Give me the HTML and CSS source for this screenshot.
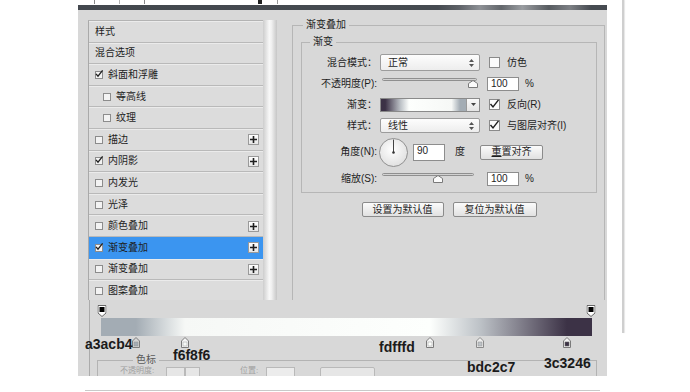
FILE: index.html
```html
<!DOCTYPE html>
<html>
  <head>
    <meta charset="utf-8">
    <link rel="stylesheet" href="styles.css">
  </head>
  <body>
    <div class="page">
      <div class="shot">
        <div class="strip">
          <span class="tick tick-a"></span>
          <span class="tick tick-b"></span>
          <span class="tick tick-c"></span>
          <span class="tick tick-d"></span>
          <span class="tick tick-e"></span>
        </div>
        <div class="titlebar"></div>

        <div class="dialog">
          <div class="main">
            <ul class="styles-list">
              <li class="row"><span>样式</span></li>
              <li class="row"><span>混合选项</span></li>
              <li class="row">
                <span class="box"><svg width="8" height="8" viewBox="0 0 8 8"><path d="M1 3.8 L3 6.2 L7.6 0.4" fill="none" stroke="#1e1e1e" stroke-width="1.3"/></svg></span>
                <span>斜面和浮雕</span>
              </li>
              <li class="row sub"><span class="box"></span><span>等高线</span></li>
              <li class="row sub"><span class="box"></span><span>纹理</span></li>
              <li class="row">
                <span class="box"></span><span>描边</span>
                <span class="plus"><svg width="7" height="7" viewBox="0 0 7 7"><path d="M3.5 0 V7 M0 3.5 H7" stroke="#1e1e1e" stroke-width="1.6"/></svg></span>
              </li>
              <li class="row">
                <span class="box"><svg width="8" height="8" viewBox="0 0 8 8"><path d="M1 3.8 L3 6.2 L7.6 0.4" fill="none" stroke="#1e1e1e" stroke-width="1.3"/></svg></span>
                <span>内阴影</span>
                <span class="plus"><svg width="7" height="7" viewBox="0 0 7 7"><path d="M3.5 0 V7 M0 3.5 H7" stroke="#1e1e1e" stroke-width="1.6"/></svg></span>
              </li>
              <li class="row"><span class="box"></span><span>内发光</span></li>
              <li class="row"><span class="box"></span><span>光泽</span></li>
              <li class="row">
                <span class="box"></span><span>颜色叠加</span>
                <span class="plus"><svg width="7" height="7" viewBox="0 0 7 7"><path d="M3.5 0 V7 M0 3.5 H7" stroke="#1e1e1e" stroke-width="1.6"/></svg></span>
              </li>
              <li class="row active">
                <span class="box"><svg width="8" height="8" viewBox="0 0 8 8"><path d="M1 3.8 L3 6.2 L7.6 0.4" fill="none" stroke="#1e1e1e" stroke-width="1.3"/></svg></span>
                <span>渐变叠加</span>
                <span class="plus"><svg width="7" height="7" viewBox="0 0 7 7"><path d="M3.5 0 V7 M0 3.5 H7" stroke="#1e1e1e" stroke-width="1.6"/></svg></span>
              </li>
              <li class="row">
                <span class="box"></span><span>渐变叠加</span>
                <span class="plus"><svg width="7" height="7" viewBox="0 0 7 7"><path d="M3.5 0 V7 M0 3.5 H7" stroke="#1e1e1e" stroke-width="1.6"/></svg></span>
              </li>
              <li class="row"><span class="box"></span><span>图案叠加</span></li>
            </ul>
            <div class="scrollbar"></div>

            <fieldset class="group outer">
              <legend>渐变叠加</legend>
              <fieldset class="group inner">
                <legend>渐变</legend>

                <div class="form-row">
                  <span class="field-label">混合模式：</span>
                  <div class="select">
                    <span>正常</span>
                    <svg width="5" height="8" viewBox="0 0 5 8"><path d="M0 3 L2.5 0 L5 3 Z M0 5 L2.5 8 L5 5 Z" fill="#555"/></svg>
                  </div>
                  <div class="check-wrap"><span class="check"></span><span>仿色</span></div>
                </div>

                <div class="form-row">
                  <span class="field-label">不透明度(P):</span>
                  <div class="slider">
                    <div class="track"></div>
                    <svg class="thumb thumb-opacity" width="10" height="8" viewBox="0 0 10 8"><path d="M0.5 7.5 V3.5 L5 0.5 L9.5 3.5 V7.5 Z" fill="#fbfbfb" stroke="#7a7a7a"/></svg>
                  </div>
                  <span class="num">100</span>
                  <span class="unit">%</span>
                </div>

                <div class="form-row">
                  <span class="field-label">渐变：</span>
                  <div class="ramp-pick">
                    <div class="swatch"></div>
                    <div class="drop"><svg width="5" height="3" viewBox="0 0 5 3"><path d="M0 0 H5 L2.5 3 Z" fill="#444"/></svg></div>
                  </div>
                  <div class="check-wrap">
                    <span class="check"><svg width="10" height="10" viewBox="0 0 10 10"><path d="M1.5 5 L4 8 L9.5 0.8" fill="none" stroke="#1e1e1e" stroke-width="1.4"/></svg></span>
                    <span>反向(R)</span>
                  </div>
                </div>

                <div class="form-row">
                  <span class="field-label">样式：</span>
                  <div class="select select-short">
                    <span>线性</span>
                    <svg width="5" height="8" viewBox="0 0 5 8"><path d="M0 3 L2.5 0 L5 3 Z M0 5 L2.5 8 L5 5 Z" fill="#555"/></svg>
                  </div>
                  <div class="check-wrap">
                    <span class="check"><svg width="10" height="10" viewBox="0 0 10 10"><path d="M1.5 5 L4 8 L9.5 0.8" fill="none" stroke="#1e1e1e" stroke-width="1.4"/></svg></span>
                    <span>与图层对齐(I)</span>
                  </div>
                </div>

                <div class="form-row tall">
                  <span class="field-label">角度(N):</span>
                  <div class="ctrl">
                    <svg class="dial" width="29" height="29" viewBox="0 0 29 29">
                      <defs>
                        <radialGradient id="dialFill" cx="0.45" cy="0.4" r="0.65">
                          <stop offset="0" stop-color="#ffffff"/>
                          <stop offset="1" stop-color="#dedede"/>
                        </radialGradient>
                      </defs>
                      <circle cx="14.5" cy="14.5" r="14" fill="url(#dialFill)" stroke="#8f8f8f"/>
                      <path d="M14.5 14.5 V1.5" stroke="#444" stroke-width="1"/>
                      <circle cx="14.5" cy="14.5" r="1.3" fill="#333"/>
                    </svg>
                    <span class="num num-angle">90</span>
                    <span class="unit-deg">度</span>
                  </div>
                  <button class="btn btn-reset"><u>重</u>置对齐</button>
                </div>

                <div class="form-row">
                  <span class="field-label">缩放(S):</span>
                  <div class="slider slider-scale">
                    <div class="track"></div>
                    <svg class="thumb thumb-scale" width="10" height="8" viewBox="0 0 10 8"><path d="M0.5 7.5 V3.5 L5 0.5 L9.5 3.5 V7.5 Z" fill="#fbfbfb" stroke="#7a7a7a"/></svg>
                  </div>
                  <span class="num">100</span>
                  <span class="unit">%</span>
                </div>
              </fieldset>

              <div class="btn-row">
                <button class="btn btn-default">设置为默认值</button>
                <button class="btn btn-restore">复位为默认值</button>
              </div>
            </fieldset>
          </div>

          <div class="editor">
            <div class="editor-frame">
              <div class="ramp">
                <div class="ramp-stops">
                  <svg class="stop stop-left" width="9" height="12" viewBox="0 0 9 12"><path d="M0.5 0.5 H8.5 V8 L4.5 11.5 L0.5 8 Z" fill="#fff" stroke="#666"/><rect x="2" y="2" width="5" height="5" fill="#000"/></svg>
                  <svg class="stop stop-right" width="9" height="12" viewBox="0 0 9 12"><path d="M0.5 0.5 H8.5 V8 L4.5 11.5 L0.5 8 Z" fill="#fff" stroke="#666"/><rect x="2" y="2" width="5" height="5" fill="#000"/></svg>
                </div>
                <div class="ramp-bar"></div>
                <div class="color-stops">
                  <svg class="stop stop-1" width="8" height="11" viewBox="0 0 8 11"><path d="M0.5 10.5 V4 L4 0.5 L7.5 4 V10.5 Z" fill="#d4d4d4" stroke="#7a7a7a"/><rect x="2" y="5" width="4" height="4" fill="#a3acb4" stroke="#999" stroke-width="0.6"/></svg>
                  <svg class="stop stop-2" width="8" height="11" viewBox="0 0 8 11"><path d="M0.5 10.5 V4 L4 0.5 L7.5 4 V10.5 Z" fill="#f6f6f6" stroke="#7a7a7a"/><rect x="2" y="5" width="4" height="4" fill="#f6f8f6" stroke="#aaa" stroke-width="0.6"/></svg>
                  <svg class="stop stop-3" width="8" height="11" viewBox="0 0 8 11"><path d="M0.5 10.5 V4 L4 0.5 L7.5 4 V10.5 Z" fill="#f6f6f6" stroke="#7a7a7a"/><rect x="2" y="5" width="4" height="4" fill="#fdfffd" stroke="#aaa" stroke-width="0.6"/></svg>
                  <svg class="stop stop-4" width="8" height="11" viewBox="0 0 8 11"><path d="M0.5 10.5 V4 L4 0.5 L7.5 4 V10.5 Z" fill="#efefef" stroke="#8a8a8a"/><rect x="2" y="5" width="4" height="4" fill="#bdc2c7" stroke="#999" stroke-width="0.6"/></svg>
                  <svg class="stop stop-5" width="8" height="11" viewBox="0 0 8 11"><path d="M0.5 10.5 V4 L4 0.5 L7.5 4 V10.5 Z" fill="#f2f2f2" stroke="#7a7a7a"/><rect x="2" y="5" width="4" height="4" fill="#3c3246" stroke="#666" stroke-width="0.6"/></svg>
                </div>
              </div>

              <fieldset class="stop-group">
                <legend>色标</legend>
                <div class="faint-row">
                  <span class="faint-label">不透明度:</span>
                  <span class="faint-box box-num"></span>
                  <span class="faint-box box-spin"></span>
                  <span class="faint-label faint-pos">位置:</span>
                  <span class="faint-box box-pos"></span>
                  <span class="faint-box box-btn"></span>
                </div>
              </fieldset>
            </div>

            <span class="hex hex-a">a3acb4</span>
            <span class="hex hex-b">f6f8f6</span>
            <span class="hex hex-c">fdfffd</span>
            <span class="hex hex-d">bdc2c7</span>
            <span class="hex hex-e">3c3246</span>
          </div>
        </div>
      </div>
      <div class="side-line"></div>
    </div>
    <div class="bottom-line"></div>
  </body>
</html>
```

FILE: styles.css
```css
* {
  box-sizing: border-box;
}

body {
  margin: 0;
  background: #fff;
  font-family: "Liberation Sans", "Noto Sans CJK SC", sans-serif;
  font-size: 10px;
  color: #1e1e1e;
}

.page {
  display: flex;
  align-items: flex-start;
  margin-left: 78px;
}

.shot {
  width: 529px;
}

/* scraps of the screenshot above */
.strip {
  height: 5px;
  display: flex;
  align-items: flex-start;
}

.tick {
  width: 1px;
  height: 4px;
  background: #8a8a8a;
}
.tick-a { margin-left: 16px; }
.tick-b { margin-left: 24px; background: #b5b5b5; }
.tick-c { margin-left: 24px; }
.tick-d { margin-left: 113px; width: 4px; background: #222; }
.tick-e { margin-left: 15px; background: #9a9a9a; }

.titlebar {
  height: 5px;
  background: linear-gradient(to right, #43484e 0%, #464b51 68%, #5d6167 72%, #8e9196 76%, #62666b 80%, #9a9da1 84%, #575b60 89%, #7d8085 93%, #464b51 97%);
}

.dialog {
  background: #d8d8d8;
}

.main {
  height: 290px;
  display: flex;
  padding: 8px 2px 0 10px;
  overflow: hidden;
}

/* left list of layer styles */
.styles-list {
  width: 175px;
  margin: 2px 0 0;
  padding: 0;
  list-style: none;
  border-left: 1px solid #a9a9a9;
  border-top: 1px solid #b3b3b3;
}

.row {
  height: 21.6px;
  display: flex;
  align-items: center;
  padding-left: 6px;
  background: #dcdcdc;
  border-top: 1px solid #ebebeb;
  border-bottom: 1px solid #b9b9b9;
  line-height: 12px;
  white-space: nowrap;
}

.row.sub {
  padding-left: 14px;
}

.row.active {
  background: #3b95f0;
  border-top-color: #3b95f0;
  border-bottom-color: #3b95f0;
}

.box {
  width: 8px;
  height: 8px;
  margin-right: 5px;
  border: 1px solid #8c8c8c;
  background: #f3f3f3;
  display: flex;
}

.box svg {
  margin: -2px 0 0 -1px;
  overflow: visible;
}

.plus {
  width: 11px;
  height: 11px;
  margin-left: auto;
  margin-right: 4px;
  border: 1px solid #9a9a9a;
  background: linear-gradient(#ffffff, #e6e6e6);
  display: flex;
  align-items: center;
  justify-content: center;
}

.scrollbar {
  width: 14px;
  margin-top: 2px;
  background: linear-gradient(to right, #cdcdcd, #f8f8f8 45%, #f1f1f1 60%, #c6c6c6);
}

/* right side group boxes */
.group {
  margin: 0;
  border: 1px solid #b6b6b6;
  min-width: 0;
}

.group > legend {
  padding: 0 3px;
  line-height: 14px;
  font-size: 10px;
}

.outer {
  flex: 1;
  margin-left: 15px;
  padding: 3px 7px 0 8px;
  border-bottom: none;
}

.outer > legend {
  margin-left: 2px;
}

.inner {
  padding: 3px 0;
}

.inner > legend {
  margin-left: 8px;
}

.form-row {
  height: 21px;
  display: flex;
  align-items: center;
  white-space: nowrap;
}

.form-row.tall {
  height: 32px;
}

.field-label {
  width: 75px;
  margin-right: 3px;
  text-align: right;
  line-height: 12px;
}

.select {
  width: 100px;
  height: 17px;
  padding: 0 5px 0 7px;
  display: flex;
  align-items: center;
  justify-content: space-between;
  border: 1px solid #9c9c9c;
  border-radius: 2px;
  background: linear-gradient(#fdfdfd, #ededed);
  line-height: 12px;
}

.select-short {
  height: 15px;
}

.check-wrap {
  margin-left: 9px;
  display: flex;
  align-items: center;
  gap: 7px;
  line-height: 12px;
}

.check {
  width: 11px;
  height: 11px;
  border: 1px solid #8a8a8a;
  background: #fbfbfb;
  display: flex;
}

.check svg {
  margin: -1px 0 0 -1px;
  overflow: visible;
}

.slider {
  position: relative;
  width: 100px;
  height: 11px;
  padding: 0 3px 0 2px;
}

.slider-scale {
  padding-right: 6px;
}

.track {
  height: 3px;
  border: 1px solid #8f8f8f;
  border-radius: 2px;
  background: linear-gradient(#bdbdbd, #e6e6e6);
}

.thumb {
  position: absolute;
  top: 2px;
}

.thumb-opacity { left: 88px; }
.thumb-scale { left: 53px; }

.num {
  width: 32px;
  height: 14px;
  margin-left: 7px;
  padding-left: 3px;
  border: 1px solid #8d8d8d;
  background: #fff;
  line-height: 12px;
}

.unit {
  margin-left: 6px;
  line-height: 12px;
}

.ramp-pick {
  width: 100px;
  height: 14px;
  display: flex;
  border: 1px solid #8a8a8a;
}

.swatch {
  flex: 1;
  background: linear-gradient(to right, #3c3246 5%, #bdc2c7 23%, #fdfffd 33%, #f6f8f6 83%, #a3acb4 93%);
}

.drop {
  width: 13px;
  display: flex;
  align-items: center;
  justify-content: center;
  border-left: 1px solid #9a9a9a;
  background: linear-gradient(#fafafa, #e4e4e4);
}

.ctrl {
  width: 100px;
  display: flex;
  align-items: center;
}

.dial {
  margin-left: -1px;
}

.num-angle {
  height: 17px;
  margin-left: 5px;
}

.unit-deg {
  margin-left: 10px;
  line-height: 12px;
}

.btn {
  height: 15px;
  padding: 0;
  border: 1px solid #8b8b8b;
  border-radius: 2px;
  background: linear-gradient(#fbfbfb, #e1e1e1);
  font-family: inherit;
  font-size: 10px;
  line-height: 12px;
  color: #1e1e1e;
  text-align: center;
}

.btn-reset { width: 63px; }
.btn-default { width: 82px; }
.btn-restore { width: 84px; }

.btn-row {
  margin-top: 9px;
  display: flex;
  justify-content: center;
  gap: 9px;
}

/* gradient editor pasted over the bottom */
.editor {
  position: relative;
  height: 76px;
  padding-left: 11px;
  overflow: hidden;
}

.editor-frame {
  height: 100%;
  padding: 5px 10px 0 7px;
  border-left: 1px solid #ababab;
}

.ramp {
  margin: 0 5px 0 4px;
}

.ramp-stops,
.color-stops {
  position: relative;
  height: 12px;
}

.color-stops {
  height: 11px;
  margin-top: 1px;
}

.stop {
  position: absolute;
  top: 0;
  display: block;
  transform: translateX(-50%);
}

.stop-left { left: 0.2%; }
.stop-right { left: 99.8%; }
.stop-1 { left: 7.1%; }
.stop-2 { left: 17.1%; }
.stop-3 { left: 67%; }
.stop-4 { left: 77.2%; }
.stop-5 { left: 94.9%; }

.ramp-bar {
  height: 18px;
  margin-top: 1px;
  background: linear-gradient(to right, #a3acb4 7.1%, #f6f8f6 17.1%, #fdfffd 67%, #bdc2c7 77.2%, #3c3246 94.9%);
}

.stop-group {
  margin: 6px 0 0;
  padding: 1px 0 0 22px;
  border: 1px solid #b3b3b3;
  border-bottom: none;
  min-width: 0;
}

.stop-group > legend {
  margin-left: 13px;
  padding: 0 3px;
  line-height: 12px;
  color: #5a5a5a;
}

.faint-row {
  height: 9px;
  display: flex;
  align-items: flex-start;
  color: #a0a0a0;
  white-space: nowrap;
}

.faint-label {
  width: 46px;
  font-size: 8px;
  line-height: 8px;
}

.faint-pos {
  width: 23px;
  margin-left: 40px;
}

.faint-box {
  height: 12px;
  border: 1px solid #b9b9b9;
  background: #e6e6e6;
}

.box-num { width: 19px; }
.box-spin { width: 15px; }
.box-pos { width: 29px; margin-left: 3px; background: #ececec; }
.box-btn { width: 55px; margin-left: 25px; border-radius: 2px; }

.hex {
  position: absolute;
  font-family: "Liberation Sans", sans-serif;
  font-weight: bold;
  font-size: 14px;
  line-height: 16px;
  color: #1b1b1b;
}

.hex-a { left: 7px; top: 36px; }
.hex-b { left: 95px; top: 47px; }
.hex-c { left: 301px; top: 39px; }
.hex-d { left: 389px; top: 59px; }
.hex-e { left: 466px; top: 55px; }

.side-line {
  width: 2px;
  height: 333px;
  margin-left: 15px;
  background: #cfcfcf;
  box-shadow: 1px 0 1px #e6e6e6;
}

.bottom-line {
  width: 515px;
  height: 1px;
  margin: 14px 0 0 85px;
  background: #c9c9c9;
}
```
